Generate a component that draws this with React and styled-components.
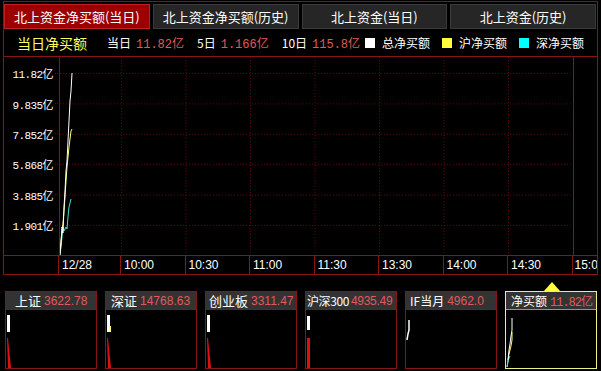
import React from 'react';
import styled, { createGlobalStyle } from 'styled-components';

const GlobalStyle = createGlobalStyle`
  html, body {
    margin: 0;
    padding: 0;
    background: #000;
  }
`;

const RED_LINE = '#8a1414';
const DOT_LINE = '#5a0c0c';
const VALUE_RED = '#e05a5a';
const CJK = '"Noto Sans CJK SC", "Noto Sans", sans-serif';
const MONO = '"Liberation Mono", "Noto Sans CJK SC", monospace';

const Screen = styled.div`
  width: 601px;
  height: 371px;
  background: #000;
  overflow: hidden;
  font-family: ${CJK};
  color: #fff;
  padding-top: 1px;
  box-sizing: border-box;
`;

const Frame = styled.div`
  margin-left: 3px;
  width: 595px;
  box-sizing: border-box;
  border: 1px solid ${RED_LINE};
  border-bottom: none;
`;

const TabBar = styled.div`
  display: grid;
  grid-template-columns: repeat(4, 1fr);
  gap: 3px;
  padding: 2px 1px 0 0;
  height: 27px;
  box-sizing: border-box;
`;

const Tab = styled.div`
  display: flex;
  align-items: center;
  justify-content: center;
  font-size: 13px;
  line-height: 1;
  background: ${p => (p.$active ? '#9c0000' : '#262626')};
  border: 1px solid ${p => (p.$active ? '#c02020' : '#3a3a3a')};
  color: #fff;
`;

const LegendRow = styled.div`
  display: flex;
  align-items: center;
  height: 27px;
  padding-left: 13px;
  font-size: 12px;
  white-space: nowrap;
`;

const Title = styled.span`
  color: #ffff60;
  font-size: 14px;
  margin-right: 20px;
`;

const StatLabel = styled.span`
  color: #fff;
  margin-right: 5px;
`;

const StatValue = styled.span`
  color: ${VALUE_RED};
  font-family: ${MONO};
  font-size: 12px;
  margin-right: ${p => (p.$last ? 5 : 13)}px;
`;

const Swatch = styled.span`
  width: 10px;
  height: 10px;
  background: ${p => p.$color};
  margin: 0 7px 0 ${p => (p.$first ? 0 : 12)}px;
`;

const SwatchLabel = styled.span`
  color: #fff;
  font-size: 12px;
`;

const ChartRow = styled.div`
  display: grid;
  grid-template-columns: 55px 515px 1fr;
  height: 198px;
  border-top: 1px solid ${RED_LINE};
`;

const YAxis = styled.div`
  display: flex;
  flex-direction: column;
  padding-top: 1px;
`;

const YLabel = styled.div`
  height: 30.4px;
  display: flex;
  align-items: center;
  justify-content: flex-end;
  font-family: ${MONO};
  font-size: 11px;
  letter-spacing: -0.6px;
  color: #fff;
  padding-right: 1px;
  &::after {
    content: '';
    width: 3px;
    border-top: 1px dotted ${DOT_LINE};
    margin-left: 2px;
  }
`;

const Plot = styled.div`
  border-left: 1px solid ${RED_LINE};
  border-right: 1px solid ${RED_LINE};
`;

const TimeAxis = styled.div`
  display: grid;
  grid-template-columns: 55px 62px repeat(7, 64.5px) 1fr;
  height: 18px;
  border-top: 1px solid ${RED_LINE};
  border-bottom: 1px solid ${RED_LINE};
`;

const TimeCell = styled.div`
  border-right: 1px solid ${RED_LINE};
  font-family: "Liberation Sans", Arial, sans-serif;
  font-size: 12px;
  line-height: 18px;
  padding-left: 3px;
  color: #fff;
  white-space: nowrap;
  overflow: hidden;
  &:last-child {
    border-right: none;
    padding-left: 2px;
  }
`;

const Panels = styled.div`
  display: grid;
  grid-template-columns: repeat(6, 92px);
  gap: 8px;
  padding: 16px 0 0 5px;
`;

const Panel = styled.div`
  position: relative;
  height: 78px;
  box-sizing: border-box;
  border: 1px solid ${p => (p.$selected ? '#f0f080' : RED_LINE)};
  display: flex;
  flex-direction: column;
`;

const PanelHeader = styled.div`
  flex: none;
  height: 17px;
  background: #333;
  border-bottom: 1px solid ${p => (p.$selected ? '#a0a040' : RED_LINE)};
  display: flex;
  align-items: center;
  padding-left: ${p => p.$pad}px;
  white-space: nowrap;
  overflow: hidden;
`;

const PanelName = styled.span`
  font-size: ${p => p.$size || 13}px;
  color: #fff;
  margin-right: ${p => (p.$tight ? 2 : 3)}px;
  letter-spacing: ${p => (p.$tight ? '-0.4px' : '0')};
`;

const PanelValue = styled.span`
  font-family: ${p => (p.$mono ? MONO : '"Liberation Sans", Arial, sans-serif')};
  font-size: 12px;
  color: ${VALUE_RED};
  letter-spacing: ${p => (p.$mono ? '-1px' : p.$tight ? '-0.3px' : '0')};
`;

const MiniBody = styled.svg`
  display: block;
  flex: 1;
  width: 90px;
`;

const Pointer = styled.div`
  position: absolute;
  top: -10px;
  left: 38px;
  width: 0;
  height: 0;
  border-left: 8px solid transparent;
  border-right: 8px solid transparent;
  border-bottom: 9px solid #ffff40;
`;

const yLabels = ['11.82亿', '9.835亿', '7.852亿', '5.868亿', '3.885亿', '1.901亿'];
const times = ['12/28', '10:00', '10:30', '11:00', '11:30', '13:30', '14:00', '14:30', '15:00'];

const whiteLine = '0,198 1,186 2,170 3,176 4,150 5,134 6,114 7,104 8,84 9,64 10,44 11,34 12,16';
const yellowLine = '0,196 1,184 2,174 3,166 4,154 5,140 6,124 7,110 8,100 9,90 10,82 11,74 12,72';
const cyanLine = '0,198 1,190 2,180 3,170 4,174 5,172 6,170 7,172 8,160 9,150 10,146 11,142';

function MainChart() {
  const hLines = [16, 46.4, 76.8, 107.2, 137.6, 168];
  const vLines = [61, 125.5, 190, 254.5, 319, 383.5, 448];
  return (
    <svg width="513" height="198" style={{ display: 'block' }}>
      {hLines.map(y => (
        <line key={y} x1="0" x2="513" y1={y + 0.5} y2={y + 0.5} stroke={DOT_LINE} strokeDasharray="1 2" />
      ))}
      {vLines.map(x => (
        <line key={x} x1={x + 0.5} x2={x + 0.5} y1="0" y2="198" stroke={DOT_LINE} strokeDasharray="1 2" />
      ))}
      <polyline points={cyanLine} fill="none" stroke="#40e0d0" strokeWidth="1" />
      <polyline points={yellowLine} fill="none" stroke="#ffff70" strokeWidth="1" />
      <polyline points={whiteLine} fill="none" stroke="#ffffff" strokeWidth="1" />
    </svg>
  );
}

function MiniChart({ kind }) {
  if (kind === 'flow') {
    return (
      <MiniBody viewBox="0 0 90 58">
        <polyline points="1,57 2,50 3,44 4,40 5,36 6,30 6,22" fill="none" stroke="#ffff70" />
        <polyline points="1,57 2,52 3,48 4,46" fill="none" stroke="#40e0d0" />
        <polyline points="2,50 3,40 4,34 5,26 6,20 6,8" fill="none" stroke="#fff" />
      </MiniBody>
    );
  }
  if (kind === 'if') {
    return (
      <MiniBody viewBox="0 0 90 58">
        <polyline points="1,30 2,24 3,20 3,10" fill="none" stroke="#fff" strokeWidth="1.5" />
      </MiniBody>
    );
  }
  const white = kind === 'hs300' ? [1, 6, 3, 14] : [1, 5, 3, 17];
  const red = kind === 'hs300' ? '1,28 4,28 4,58 1,58' : '1,28 2,28 5,58 2,58';
  return (
    <MiniBody viewBox="0 0 90 58">
      <rect x={white[0]} y={white[1]} width={white[2]} height={white[3]} fill="#ffffff" />
      {kind === 'sz' && <rect x="3" y="16" width="2" height="6" fill="#ffff70" />}
      <polygon points={red} fill="#e01010" />
    </MiniBody>
  );
}

const panels = [
  { name: '上证', value: '3622.78', pad: 9, kind: 'sh' },
  { name: '深证', value: '14768.63', pad: 5, kind: 'sz' },
  { name: '创业板', value: '3311.47', pad: 3, kind: 'cyb' },
  { name: '沪深300', value: '4935.49', pad: 1, kind: 'hs300', size: 12, tight: true },
  { name: 'IF当月', value: '4962.0', pad: 4, kind: 'if', size: 12 },
  { name: '净买额', value: '11.82亿', pad: 5, kind: 'flow', size: 12, mono: true, selected: true },
];

export default function App() {
  return (
    <Screen>
      <GlobalStyle />
      <Frame>
        <TabBar>
          <Tab $active>北上资金净买额(当日)</Tab>
          <Tab>北上资金净买额(历史)</Tab>
          <Tab>北上资金(当日)</Tab>
          <Tab>北上资金(历史)</Tab>
        </TabBar>
        <LegendRow>
          <Title>当日净买额</Title>
          <StatLabel>当日</StatLabel>
          <StatValue>11.82亿</StatValue>
          <StatLabel>5日</StatLabel>
          <StatValue>1.166亿</StatValue>
          <StatLabel>10日</StatLabel>
          <StatValue $last>115.8亿</StatValue>
          <Swatch $color="#fff" $first />
          <SwatchLabel>总净买额</SwatchLabel>
          <Swatch $color="#ffff40" />
          <SwatchLabel>沪净买额</SwatchLabel>
          <Swatch $color="#00ffff" />
          <SwatchLabel>深净买额</SwatchLabel>
        </LegendRow>
        <ChartRow>
          <YAxis>
            {yLabels.map(l => <YLabel key={l}>{l}</YLabel>)}
          </YAxis>
          <Plot>
            <MainChart />
          </Plot>
          <div />
        </ChartRow>
        <TimeAxis>
          <TimeCell />
          {times.map(t => <TimeCell key={t}>{t}</TimeCell>)}
        </TimeAxis>
      </Frame>
      <Panels>
        {panels.map(p => (
          <Panel key={p.name} $selected={p.selected}>
            {p.selected && <Pointer />}
            <PanelHeader $pad={p.pad} $selected={p.selected}>
              <PanelName $size={p.size} $tight={p.tight}>{p.name}</PanelName>
              <PanelValue $mono={p.mono} $tight={p.tight}>{p.value}</PanelValue>
            </PanelHeader>
            <MiniChart kind={p.kind} />
          </Panel>
        ))}
      </Panels>
    </Screen>
  );
}
